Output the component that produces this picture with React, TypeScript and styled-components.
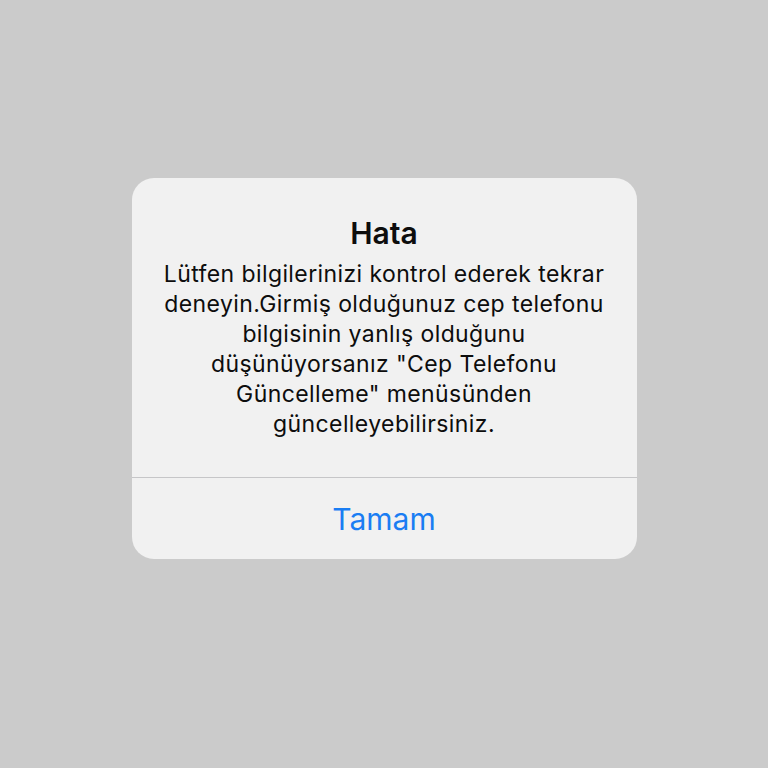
import React from "react";
import styled, { createGlobalStyle } from "styled-components";

const GlobalStyle = createGlobalStyle`
  html, body {
    margin: 0;
    padding: 0;
    background: #cbcbcb;
  }
  * { box-sizing: border-box; }
`;

const Page = styled.div`
  min-height: 768px;
  background: #cbcbcb;
  display: flex;
  justify-content: center;
  align-items: flex-start;
  padding-top: 178px;
  font-family: Inter, "Liberation Sans", sans-serif;
`;

const Alert = styled.div`
  width: 505px;
  background: #f1f1f1;
  border-radius: 22px;
  overflow: hidden;
  display: flex;
  flex-direction: column;
`;

const Content = styled.div`
  padding: 37px 20px 38px;
  display: flex;
  flex-direction: column;
  align-items: center;
  text-align: center;
  color: #0d0d0d;
`;

const Title = styled.h2`
  margin: 0;
  font-size: 30px;
  line-height: 36px;
  font-weight: 600;
`;

const Message = styled.p`
  margin: 8px 0 0;
  font-size: 23px;
  line-height: 30px;
  letter-spacing: 0.4px;
  font-weight: 400;
  white-space: nowrap;
`;

const Divider = styled.div`
  height: 1px;
  background: #c6c6c8;
`;

const ActionButton = styled.button`
  height: 81px;
  border: none;
  background: transparent;
  font-family: inherit;
  font-size: 30px;
  font-weight: 400;
  color: #1a7df3;
  display: flex;
  align-items: center;
  justify-content: center;
  cursor: pointer;
`;

const lines = [
  "Lütfen bilgilerinizi kontrol ederek tekrar",
  "deneyin.Girmiş olduğunuz cep telefonu",
  "bilgisinin yanlış olduğunu",
  "düşünüyorsanız \"Cep Telefonu",
  "Güncelleme\" menüsünden",
  "güncelleyebilirsiniz.",
];

export default function App() {
  return (
    <>
      <GlobalStyle />
      <Page>
        <Alert>
          <Content>
            <Title>Hata</Title>
            <Message>
              {lines.map((l, i) => (
                <React.Fragment key={i}>
                  {l}
                  {i < lines.length - 1 && <br />}
                </React.Fragment>
              ))}
            </Message>
          </Content>
          <Divider />
          <ActionButton>Tamam</ActionButton>
        </Alert>
      </Page>
    </>
  );
}
